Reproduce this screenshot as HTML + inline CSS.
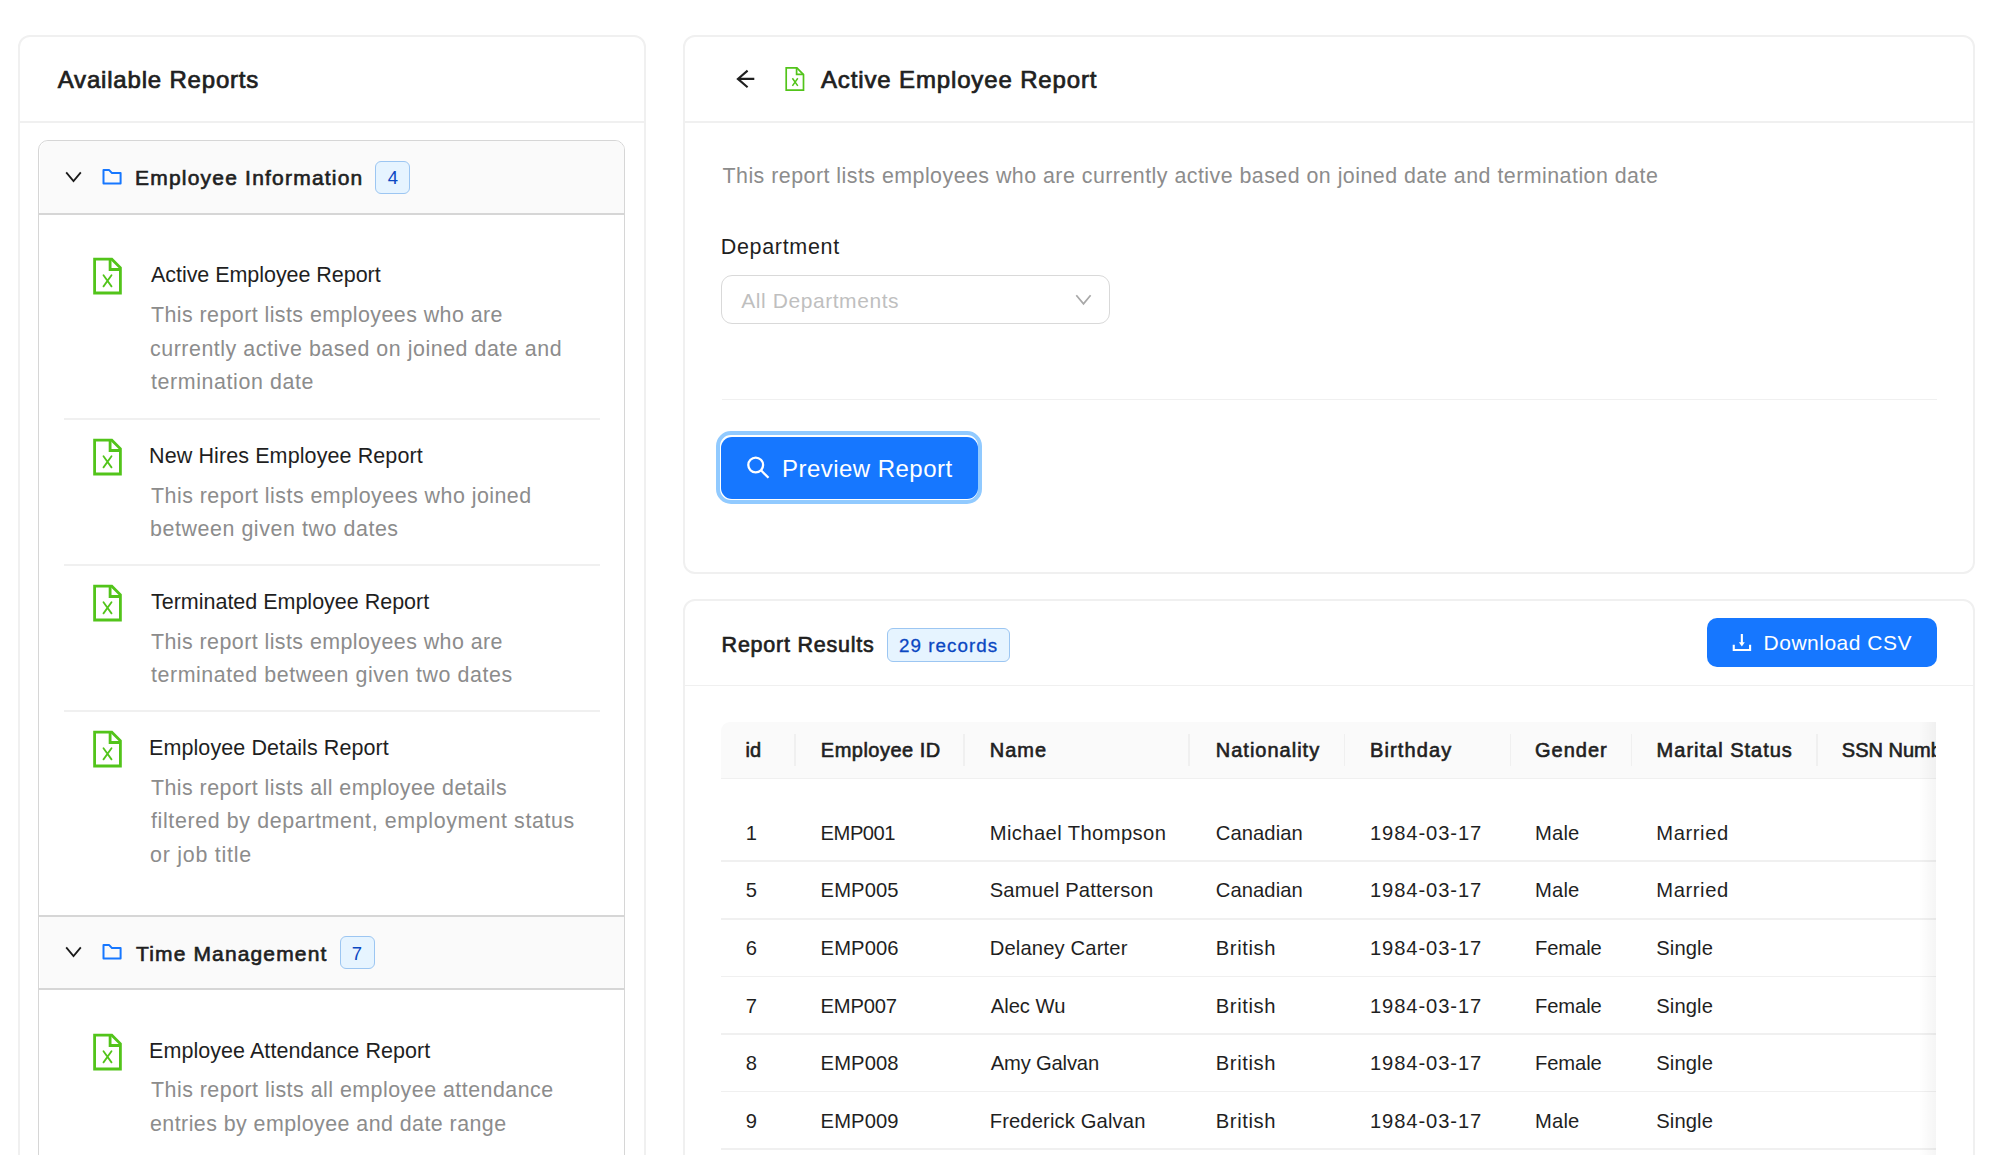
<!DOCTYPE html>
<html>
<head>
<meta charset="utf-8">
<style>
html,body{margin:0;padding:0;background:#fff;width:2000px;height:1155px;overflow:hidden;position:relative;font-family:"Liberation Sans",sans-serif;}
.a{position:absolute;box-sizing:border-box;}
.t{position:absolute;white-space:nowrap;font-family:"Liberation Sans",sans-serif;}
svg{position:absolute;overflow:visible;}
</style>
</head>
<body>
<!-- LEFT CARD -->
<div class="a" style="left:17.7px;top:34.9px;width:628px;height:1200px;border:2px solid #f0f0f0;border-radius:12px;"></div>
<div class="a" style="left:19.5px;top:120.9px;width:624.5px;height:1.8px;background:#f0f0f0;"></div>
<!-- collapse -->
<div class="a" style="left:38.2px;top:139.75px;width:587.2px;height:1100px;border:1.7px solid #d6d6d6;border-radius:10px;"></div>
<div class="a" style="left:39.7px;top:141.25px;width:584px;height:71.8px;background:#fafafa;border-radius:9px 9px 0 0;"></div>
<div class="a" style="left:38.5px;top:213.05px;width:586px;height:1.7px;background:#d6d6d6;"></div>
<div class="a" style="left:38.5px;top:915.15px;width:586px;height:1.7px;background:#d6d6d6;"></div>
<div class="a" style="left:39.7px;top:916.65px;width:584px;height:71.5px;background:#fafafa;"></div>
<div class="a" style="left:38.5px;top:988.15px;width:586px;height:1.7px;background:#d6d6d6;"></div>
<!-- item separators -->
<div class="a" style="left:64px;top:417.5px;width:536px;height:2px;background:#f0f0f0;"></div>
<div class="a" style="left:64px;top:564px;width:536px;height:2px;background:#f0f0f0;"></div>
<div class="a" style="left:64px;top:710px;width:536px;height:2px;background:#f0f0f0;"></div>
<!-- badges -->
<div class="a" style="left:375px;top:161px;width:35px;height:33px;border:1.5px solid #9cc6f2;background:#e6f4ff;border-radius:6px;"></div>
<div class="a" style="left:340px;top:936.4px;width:35px;height:33px;border:1.5px solid #9cc6f2;background:#e6f4ff;border-radius:6px;"></div>
<!-- chevrons -->
<svg style="left:0;top:0" width="1" height="1"><path d="M66.2 172.4 L73.5 181 L80.8 172.4" fill="none" stroke="#1a1a1a" stroke-width="1.8"/></svg>
<svg style="left:0;top:775.4px" width="1" height="1"><path d="M66.2 172.4 L73.5 181 L80.8 172.4" fill="none" stroke="#1a1a1a" stroke-width="1.8"/></svg>
<!-- folders -->
<svg style="left:0;top:0" width="1" height="1"><path d="M103.5 183.5 V170.1 H109.2 L112 173.1 H120.6 V183.5 Z" fill="none" stroke="#1677ff" stroke-width="2" stroke-linejoin="round"/></svg>
<svg style="left:0;top:775.4px" width="1" height="1"><path d="M103.5 183.5 V170.1 H109.2 L112 173.1 H120.6 V183.5 Z" fill="none" stroke="#1677ff" stroke-width="2" stroke-linejoin="round"/></svg>
<!-- excel icons -->
<svg style="left:92px;top:257px" width="1" height="1"><g fill="none" stroke="#52c41a"><path d="M2.6 2.2 H19.8 L28.4 10.8 V36 H2.6 Z" stroke-width="2.8"/><path d="M18.1 2.2 V12.5 H28.4" stroke-width="2.8"/><path d="M11.5 18.3 L19.5 29.4 M19.5 18.3 L11.5 29.4" stroke-width="1.8" stroke-linecap="round"/></g></svg>
<svg style="left:92px;top:437.5px" width="1" height="1"><g fill="none" stroke="#52c41a"><path d="M2.6 2.2 H19.8 L28.4 10.8 V36 H2.6 Z" stroke-width="2.8"/><path d="M18.1 2.2 V12.5 H28.4" stroke-width="2.8"/><path d="M11.5 18.3 L19.5 29.4 M19.5 18.3 L11.5 29.4" stroke-width="1.8" stroke-linecap="round"/></g></svg>
<svg style="left:92px;top:583.6px" width="1" height="1"><g fill="none" stroke="#52c41a"><path d="M2.6 2.2 H19.8 L28.4 10.8 V36 H2.6 Z" stroke-width="2.8"/><path d="M18.1 2.2 V12.5 H28.4" stroke-width="2.8"/><path d="M11.5 18.3 L19.5 29.4 M19.5 18.3 L11.5 29.4" stroke-width="1.8" stroke-linecap="round"/></g></svg>
<svg style="left:92px;top:729.6px" width="1" height="1"><g fill="none" stroke="#52c41a"><path d="M2.6 2.2 H19.8 L28.4 10.8 V36 H2.6 Z" stroke-width="2.8"/><path d="M18.1 2.2 V12.5 H28.4" stroke-width="2.8"/><path d="M11.5 18.3 L19.5 29.4 M19.5 18.3 L11.5 29.4" stroke-width="1.8" stroke-linecap="round"/></g></svg>
<svg style="left:92px;top:1032.8px" width="1" height="1"><g fill="none" stroke="#52c41a"><path d="M2.6 2.2 H19.8 L28.4 10.8 V36 H2.6 Z" stroke-width="2.8"/><path d="M18.1 2.2 V12.5 H28.4" stroke-width="2.8"/><path d="M11.5 18.3 L19.5 29.4 M19.5 18.3 L11.5 29.4" stroke-width="1.8" stroke-linecap="round"/></g></svg>

<!-- RIGHT TOP CARD -->
<div class="a" style="left:682.7px;top:34.9px;width:1292.3px;height:538.7px;border:2px solid #f0f0f0;border-radius:12px;"></div>
<div class="a" style="left:684.5px;top:120.9px;width:1289px;height:1.8px;background:#f0f0f0;"></div>
<!-- back arrow -->
<svg style="left:0;top:0" width="1" height="1"><path d="M754.3 78.9 H738.5 M747.6 70.6 L737.9 78.9 L747.6 87.2" fill="none" stroke="#1f1f1f" stroke-width="2.1" stroke-linecap="butt" stroke-linejoin="miter"/></svg>
<!-- small excel -->
<svg style="left:0;top:0" width="1" height="1"><g fill="none" stroke="#52c41a"><path d="M786.2 67.8 H796.9 L803.5 74.6 V90.2 H786.2 Z" stroke-width="1.7"/><path d="M796.6 67.8 V74.4 H803.5" stroke-width="1.7"/><path d="M792.4 78.2 L797.8 85.9 M797.8 78.2 L792.4 85.9" stroke-width="1.5" stroke-linecap="butt"/></g></svg>
<!-- select -->
<div class="a" style="left:721px;top:275.3px;width:388.5px;height:49.2px;border:1.6px solid #d9d9d9;border-radius:11px;"></div>
<svg style="left:0;top:0" width="1" height="1"><path d="M1076.3 295.2 L1083.5 303.9 L1090.6 295.2" fill="none" stroke="#a8a8a8" stroke-width="1.7"/></svg>
<!-- divider -->
<div class="a" style="left:722px;top:398.5px;width:1215px;height:1.5px;background:#f0f0f0;"></div>
<!-- preview button -->
<div class="a" style="left:715.8px;top:431.4px;width:266.4px;height:72.6px;border:4px solid #91caff;border-radius:15px;"></div>
<div class="a" style="left:721px;top:436.9px;width:256.5px;height:61.7px;background:#1677ff;border-radius:11px;"></div>
<svg style="left:0;top:0" width="1" height="1"><g fill="none" stroke="#fff" stroke-width="2.3" stroke-linecap="butt"><circle cx="755.7" cy="465" r="7.4"/><path d="M761 470.3 L768.5 477.8"/></g></svg>

<!-- RESULTS CARD -->
<div class="a" style="left:682.7px;top:598.7px;width:1292.3px;height:700px;border:2px solid #f0f0f0;border-radius:12px;"></div>
<div class="a" style="left:684.5px;top:684.6px;width:1289px;height:1.8px;background:#f0f0f0;"></div>
<div class="a" style="left:886.5px;top:628px;width:123px;height:34px;border:1.5px solid #9cc6f2;background:#e6f4ff;border-radius:6px;"></div>
<!-- download button -->
<div class="a" style="left:1706.8px;top:618px;width:229.8px;height:49px;background:#1677ff;border-radius:10px;"></div>
<svg style="left:0;top:0" width="1" height="1"><g fill="#fff" stroke="none"><rect x="1740.8" y="634" width="2.1" height="9"/><path d="M1738.9 642.2 H1744.8 L1741.85 646.4 Z"/></g><path d="M1733.75 644.8 V649.95 H1750.1 V644.8" fill="none" stroke="#fff" stroke-width="2.1"/></svg>
<!-- table -->
<div class="a" style="left:721px;top:722px;width:1215px;height:57px;background:#fafafa;border-radius:9px 0 0 0;border-bottom:1.5px solid #f0f0f0;"></div>
<div class="a" style="left:794px;top:733.5px;width:1.5px;height:32.5px;background:#f0f0f0;"></div>
<div class="a" style="left:963px;top:733.5px;width:1.5px;height:32.5px;background:#f0f0f0;"></div>
<div class="a" style="left:1188px;top:733.5px;width:1.5px;height:32.5px;background:#f0f0f0;"></div>
<div class="a" style="left:1343.5px;top:733.5px;width:1.5px;height:32.5px;background:#f0f0f0;"></div>
<div class="a" style="left:1509.5px;top:733.5px;width:1.5px;height:32.5px;background:#f0f0f0;"></div>
<div class="a" style="left:1630.5px;top:733.5px;width:1.5px;height:32.5px;background:#f0f0f0;"></div>
<div class="a" style="left:1816px;top:733.5px;width:1.5px;height:32.5px;background:#f0f0f0;"></div>
<div class="a" style="left:721px;top:860px;width:1215px;height:1.5px;background:#f0f0f0;"></div>
<div class="a" style="left:721px;top:918px;width:1215px;height:1.5px;background:#f0f0f0;"></div>
<div class="a" style="left:721px;top:975.5px;width:1215px;height:1.5px;background:#f0f0f0;"></div>
<div class="a" style="left:721px;top:1033px;width:1215px;height:1.5px;background:#f0f0f0;"></div>
<div class="a" style="left:721px;top:1090.5px;width:1215px;height:1.5px;background:#f0f0f0;"></div>
<div class="a" style="left:721px;top:1148px;width:1215px;height:1.5px;background:#f0f0f0;"></div>
<!-- scroll shadow -->
<div class="a" style="left:1919px;top:722px;width:17px;height:500px;background:linear-gradient(to right, rgba(0,0,0,0), rgba(0,0,0,0.04));"></div>

<div class="t" style="left:57.7px;top:68px;font-size:24px;line-height:24px;color:#1f1f1f;letter-spacing:0.812px;font-weight:400;-webkit-text-stroke:0.74px #1f1f1f">Available Reports</div>
<div class="t" style="left:135.0px;top:167px;font-size:21px;line-height:21px;color:#1f1f1f;letter-spacing:1.211px;font-weight:400;-webkit-text-stroke:0.65px #1f1f1f">Employee Information</div>
<div class="t" style="left:387.8px;top:169px;font-size:18.5px;line-height:18.5px;color:#0a47c2;letter-spacing:0.000px">4</div>
<div class="t" style="left:151.0px;top:265px;font-size:21.5px;line-height:21.5px;color:#1f1f1f;letter-spacing:-0.048px">Active Employee Report</div>
<div class="t" style="left:151.0px;top:305px;font-size:21.4px;line-height:21.4px;color:#8c8c8c;letter-spacing:0.441px">This report lists employees who are</div>
<div class="t" style="left:150.0px;top:339px;font-size:21.4px;line-height:21.4px;color:#8c8c8c;letter-spacing:0.537px">currently active based on joined date and</div>
<div class="t" style="left:151.0px;top:372px;font-size:21.4px;line-height:21.4px;color:#8c8c8c;letter-spacing:0.600px">termination date</div>
<div class="t" style="left:149.0px;top:446px;font-size:21.5px;line-height:21.5px;color:#1f1f1f;letter-spacing:0.104px">New Hires Employee Report</div>
<div class="t" style="left:151.0px;top:486px;font-size:21.4px;line-height:21.4px;color:#8c8c8c;letter-spacing:0.473px">This report lists employees who joined</div>
<div class="t" style="left:150.0px;top:519px;font-size:21.4px;line-height:21.4px;color:#8c8c8c;letter-spacing:0.573px">between given two dates</div>
<div class="t" style="left:151.0px;top:592px;font-size:21.5px;line-height:21.5px;color:#1f1f1f;letter-spacing:-0.012px">Terminated Employee Report</div>
<div class="t" style="left:151.0px;top:632px;font-size:21.4px;line-height:21.4px;color:#8c8c8c;letter-spacing:0.441px">This report lists employees who are</div>
<div class="t" style="left:151.0px;top:665px;font-size:21.4px;line-height:21.4px;color:#8c8c8c;letter-spacing:0.564px">terminated between given two dates</div>
<div class="t" style="left:149.0px;top:738px;font-size:21.5px;line-height:21.5px;color:#1f1f1f;letter-spacing:0.091px">Employee Details Report</div>
<div class="t" style="left:151.0px;top:778px;font-size:21.4px;line-height:21.4px;color:#8c8c8c;letter-spacing:0.454px">This report lists all employee details</div>
<div class="t" style="left:151.0px;top:811px;font-size:21.4px;line-height:21.4px;color:#8c8c8c;letter-spacing:0.625px">filtered by department, employment status</div>
<div class="t" style="left:150.0px;top:845px;font-size:21.4px;line-height:21.4px;color:#8c8c8c;letter-spacing:0.773px">or job title</div>
<div class="t" style="left:136.0px;top:943px;font-size:21px;line-height:21px;color:#1f1f1f;letter-spacing:1.143px;font-weight:400;-webkit-text-stroke:0.65px #1f1f1f">Time Management</div>
<div class="t" style="left:351.8px;top:945px;font-size:18.5px;line-height:18.5px;color:#0a47c2;letter-spacing:0.000px">7</div>
<div class="t" style="left:149.0px;top:1041px;font-size:21.5px;line-height:21.5px;color:#1f1f1f;letter-spacing:0.064px">Employee Attendance Report</div>
<div class="t" style="left:151.0px;top:1080px;font-size:21.4px;line-height:21.4px;color:#8c8c8c;letter-spacing:0.483px">This report lists all employee attendance</div>
<div class="t" style="left:150.0px;top:1114px;font-size:21.4px;line-height:21.4px;color:#8c8c8c;letter-spacing:0.448px">entries by employee and date range</div>
<div class="t" style="left:821.0px;top:68px;font-size:24px;line-height:24px;color:#1f1f1f;letter-spacing:0.857px;font-weight:400;-webkit-text-stroke:0.74px #1f1f1f">Active Employee Report</div>
<div class="t" style="left:722.5px;top:166px;font-size:21.4px;line-height:21.4px;color:#8c8c8c;letter-spacing:0.468px">This report lists employees who are currently active based on joined date and termination date</div>
<div class="t" style="left:720.8px;top:237px;font-size:21.5px;line-height:21.5px;color:#1f1f1f;letter-spacing:0.667px">Department</div>
<div class="t" style="left:741.2px;top:290px;font-size:21px;line-height:21px;color:#bfbfbf;letter-spacing:0.571px">All Departments</div>
<div class="t" style="left:782.0px;top:457px;font-size:24px;line-height:24px;color:#ffffff;letter-spacing:0.462px">Preview Report</div>
<div class="t" style="left:721.6px;top:635px;font-size:21.5px;line-height:21.5px;color:#1f1f1f;letter-spacing:0.769px;font-weight:400;-webkit-text-stroke:0.67px #1f1f1f">Report Results</div>
<div class="t" style="left:899.0px;top:637px;font-size:18.8px;line-height:18.8px;color:#0a47c2;letter-spacing:1.044px;font-weight:400;-webkit-text-stroke:0.3px #0a47c2">29 records</div>
<div class="t" style="left:1763.6px;top:632px;font-size:21px;line-height:21px;color:#ffffff;letter-spacing:0.491px">Download CSV</div>
<div class="t" style="left:745.5px;top:740px;font-size:20px;line-height:20px;color:#1f1f1f;letter-spacing:0.000px;font-weight:400;-webkit-text-stroke:0.62px #1f1f1f">id</div>
<div class="t" style="left:820.8px;top:740px;font-size:20px;line-height:20px;color:#1f1f1f;letter-spacing:0.500px;font-weight:400;-webkit-text-stroke:0.62px #1f1f1f">Employee ID</div>
<div class="t" style="left:989.8px;top:740px;font-size:20px;line-height:20px;color:#1f1f1f;letter-spacing:1.000px;font-weight:400;-webkit-text-stroke:0.62px #1f1f1f">Name</div>
<div class="t" style="left:1215.8px;top:740px;font-size:20px;line-height:20px;color:#1f1f1f;letter-spacing:1.000px;font-weight:400;-webkit-text-stroke:0.62px #1f1f1f">Nationality</div>
<div class="t" style="left:1370.0px;top:740px;font-size:20px;line-height:20px;color:#1f1f1f;letter-spacing:1.143px;font-weight:400;-webkit-text-stroke:0.62px #1f1f1f">Birthday</div>
<div class="t" style="left:1535.0px;top:740px;font-size:20px;line-height:20px;color:#1f1f1f;letter-spacing:1.000px;font-weight:400;-webkit-text-stroke:0.62px #1f1f1f">Gender</div>
<div class="t" style="left:1656.6px;top:740px;font-size:20px;line-height:20px;color:#1f1f1f;letter-spacing:1.000px;font-weight:400;-webkit-text-stroke:0.62px #1f1f1f">Marital Status</div>
<div class="t" style="left:1841.8px;top:740px;font-size:20px;line-height:20px;color:#1f1f1f;letter-spacing:0.000px;font-weight:400;-webkit-text-stroke:0.62px #1f1f1f;width:94.2px;overflow:hidden">SSN Number</div>
<div class="t" style="left:745.8px;top:823px;font-size:20.2px;line-height:20.2px;color:#1f1f1f;letter-spacing:0.000px">1</div>
<div class="t" style="left:820.6px;top:823px;font-size:20.2px;line-height:20.2px;color:#1f1f1f;letter-spacing:-0.500px">EMP001</div>
<div class="t" style="left:989.7px;top:823px;font-size:20.2px;line-height:20.2px;color:#1f1f1f;letter-spacing:0.400px">Michael Thompson</div>
<div class="t" style="left:1215.8px;top:823px;font-size:20.2px;line-height:20.2px;color:#1f1f1f;letter-spacing:0.071px">Canadian</div>
<div class="t" style="left:1370.0px;top:823px;font-size:20.2px;line-height:20.2px;color:#1f1f1f;letter-spacing:0.889px">1984-03-17</div>
<div class="t" style="left:1535.0px;top:823px;font-size:20.2px;line-height:20.2px;color:#1f1f1f;letter-spacing:0.167px">Male</div>
<div class="t" style="left:1656.3px;top:823px;font-size:20.2px;line-height:20.2px;color:#1f1f1f;letter-spacing:0.583px">Married</div>
<div class="t" style="left:745.8px;top:880px;font-size:20.2px;line-height:20.2px;color:#1f1f1f;letter-spacing:0.000px">5</div>
<div class="t" style="left:820.6px;top:880px;font-size:20.2px;line-height:20.2px;color:#1f1f1f;letter-spacing:0.100px">EMP005</div>
<div class="t" style="left:989.7px;top:880px;font-size:20.2px;line-height:20.2px;color:#1f1f1f;letter-spacing:0.200px">Samuel Patterson</div>
<div class="t" style="left:1215.8px;top:880px;font-size:20.2px;line-height:20.2px;color:#1f1f1f;letter-spacing:0.071px">Canadian</div>
<div class="t" style="left:1370.0px;top:880px;font-size:20.2px;line-height:20.2px;color:#1f1f1f;letter-spacing:0.889px">1984-03-17</div>
<div class="t" style="left:1535.0px;top:880px;font-size:20.2px;line-height:20.2px;color:#1f1f1f;letter-spacing:0.167px">Male</div>
<div class="t" style="left:1656.3px;top:880px;font-size:20.2px;line-height:20.2px;color:#1f1f1f;letter-spacing:0.583px">Married</div>
<div class="t" style="left:745.8px;top:938px;font-size:20.2px;line-height:20.2px;color:#1f1f1f;letter-spacing:0.000px">6</div>
<div class="t" style="left:820.6px;top:938px;font-size:20.2px;line-height:20.2px;color:#1f1f1f;letter-spacing:0.100px">EMP006</div>
<div class="t" style="left:989.7px;top:938px;font-size:20.2px;line-height:20.2px;color:#1f1f1f;letter-spacing:0.154px">Delaney Carter</div>
<div class="t" style="left:1215.8px;top:938px;font-size:20.2px;line-height:20.2px;color:#1f1f1f;letter-spacing:0.583px">British</div>
<div class="t" style="left:1370.0px;top:938px;font-size:20.2px;line-height:20.2px;color:#1f1f1f;letter-spacing:0.889px">1984-03-17</div>
<div class="t" style="left:1535.0px;top:938px;font-size:20.2px;line-height:20.2px;color:#1f1f1f;letter-spacing:-0.100px">Female</div>
<div class="t" style="left:1656.3px;top:938px;font-size:20.2px;line-height:20.2px;color:#1f1f1f;letter-spacing:0.100px">Single</div>
<div class="t" style="left:745.8px;top:996px;font-size:20.2px;line-height:20.2px;color:#1f1f1f;letter-spacing:0.000px">7</div>
<div class="t" style="left:820.6px;top:996px;font-size:20.2px;line-height:20.2px;color:#1f1f1f;letter-spacing:-0.200px">EMP007</div>
<div class="t" style="left:990.7px;top:996px;font-size:20.2px;line-height:20.2px;color:#1f1f1f;letter-spacing:0.000px">Alec Wu</div>
<div class="t" style="left:1215.8px;top:996px;font-size:20.2px;line-height:20.2px;color:#1f1f1f;letter-spacing:0.583px">British</div>
<div class="t" style="left:1370.0px;top:996px;font-size:20.2px;line-height:20.2px;color:#1f1f1f;letter-spacing:0.889px">1984-03-17</div>
<div class="t" style="left:1535.0px;top:996px;font-size:20.2px;line-height:20.2px;color:#1f1f1f;letter-spacing:-0.100px">Female</div>
<div class="t" style="left:1656.3px;top:996px;font-size:20.2px;line-height:20.2px;color:#1f1f1f;letter-spacing:0.100px">Single</div>
<div class="t" style="left:745.8px;top:1053px;font-size:20.2px;line-height:20.2px;color:#1f1f1f;letter-spacing:0.000px">8</div>
<div class="t" style="left:820.6px;top:1053px;font-size:20.2px;line-height:20.2px;color:#1f1f1f;letter-spacing:0.100px">EMP008</div>
<div class="t" style="left:990.7px;top:1053px;font-size:20.2px;line-height:20.2px;color:#1f1f1f;letter-spacing:-0.167px">Amy Galvan</div>
<div class="t" style="left:1215.8px;top:1053px;font-size:20.2px;line-height:20.2px;color:#1f1f1f;letter-spacing:0.583px">British</div>
<div class="t" style="left:1370.0px;top:1053px;font-size:20.2px;line-height:20.2px;color:#1f1f1f;letter-spacing:0.889px">1984-03-17</div>
<div class="t" style="left:1535.0px;top:1053px;font-size:20.2px;line-height:20.2px;color:#1f1f1f;letter-spacing:-0.100px">Female</div>
<div class="t" style="left:1656.3px;top:1053px;font-size:20.2px;line-height:20.2px;color:#1f1f1f;letter-spacing:0.100px">Single</div>
<div class="t" style="left:745.8px;top:1111px;font-size:20.2px;line-height:20.2px;color:#1f1f1f;letter-spacing:0.000px">9</div>
<div class="t" style="left:820.6px;top:1111px;font-size:20.2px;line-height:20.2px;color:#1f1f1f;letter-spacing:0.100px">EMP009</div>
<div class="t" style="left:989.7px;top:1111px;font-size:20.2px;line-height:20.2px;color:#1f1f1f;letter-spacing:0.133px">Frederick Galvan</div>
<div class="t" style="left:1215.8px;top:1111px;font-size:20.2px;line-height:20.2px;color:#1f1f1f;letter-spacing:0.583px">British</div>
<div class="t" style="left:1370.0px;top:1111px;font-size:20.2px;line-height:20.2px;color:#1f1f1f;letter-spacing:0.889px">1984-03-17</div>
<div class="t" style="left:1535.0px;top:1111px;font-size:20.2px;line-height:20.2px;color:#1f1f1f;letter-spacing:0.167px">Male</div>
<div class="t" style="left:1656.3px;top:1111px;font-size:20.2px;line-height:20.2px;color:#1f1f1f;letter-spacing:0.100px">Single</div>
</body>
</html>
